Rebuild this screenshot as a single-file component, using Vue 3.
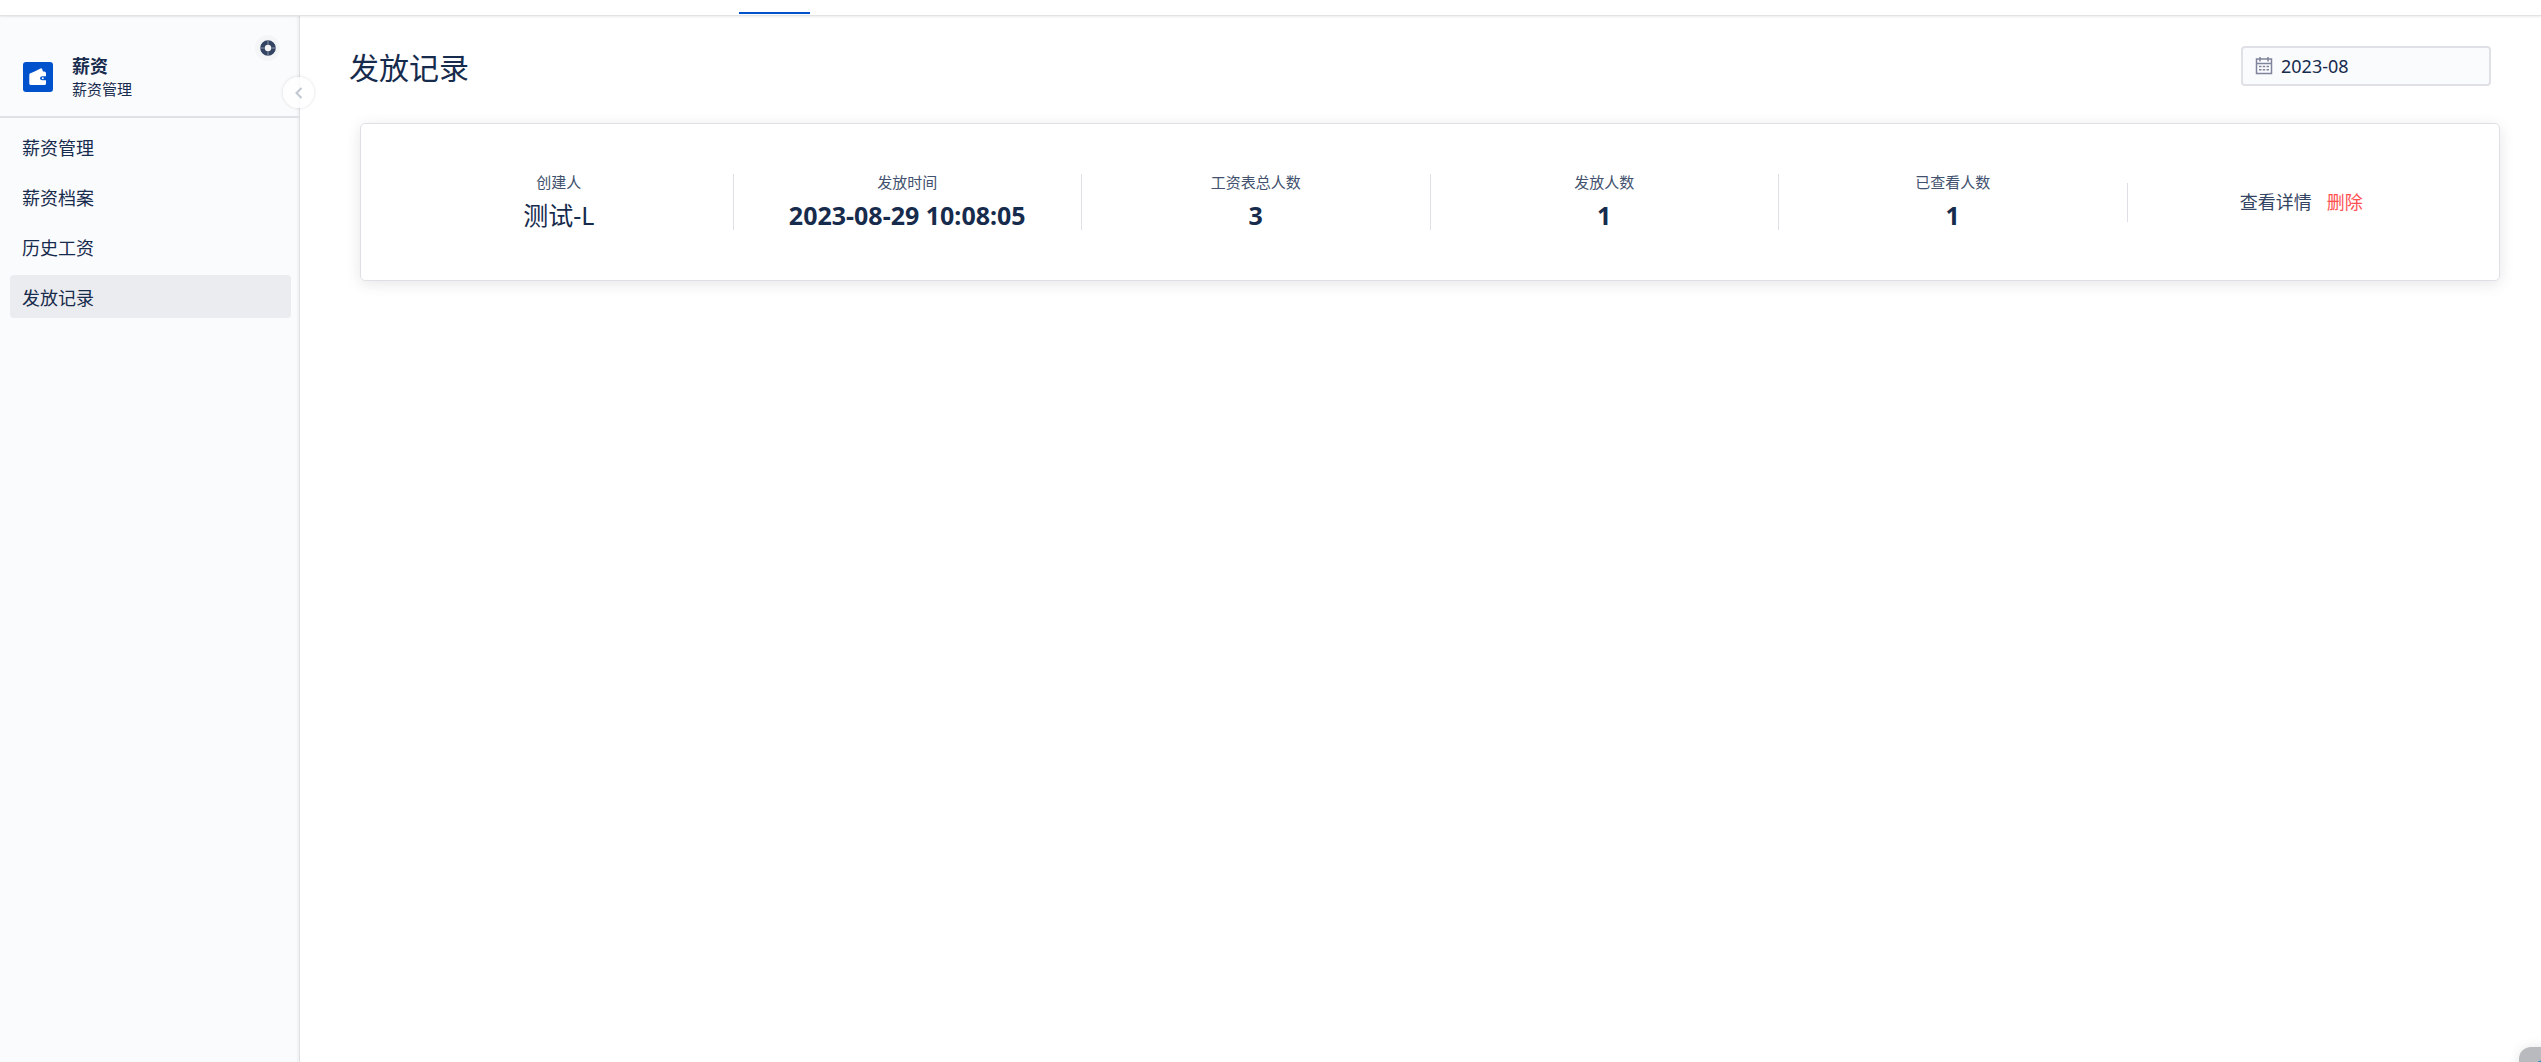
<script setup>
import { ref } from 'vue'

const menu = ['薪资管理', '薪资档案', '历史工资', '发放记录']
const active = ref('发放记录')
const month = ref('2023-08')
const record = [
  { label: '创建人', value: '测试-L', plain: true },
  { label: '发放时间', value: '2023-08-29 10:08:05' },
  { label: '工资表总人数', value: '3' },
  { label: '发放人数', value: '1' },
  { label: '已查看人数', value: '1' },
]
</script>

<template>
  <div class="app">
    <header class="topbar"><span class="tab-line"></span></header>
    <div class="body">
      <aside class="sidebar">
        <div class="brand">
          <svg class="logo" viewBox="0 0 30 30" aria-hidden="true">
            <rect width="30" height="30" rx="3" fill="#0052cc" />
            <path fill="#fff" d="M11.500 9.600 17.500 6.400q1.200-.5 1.600.5L20 9.600h1.200q1.800 0 1.800 1.700v3h-3.500q-2.500.2-2.500 2t2.500 2H23v3.200q0 1.600-1.600 1.600H8q-1.700 0-1.700-1.700V12.800Q6.300 11 8 11z" />
            <circle cx="19.800" cy="16.300" r="1" fill="#fff" />
          </svg>
          <div class="brand-text">
            <strong>薪资</strong>
            <span>薪资管理</span>
          </div>
          <button class="help" type="button" aria-label="帮助">
            <svg width="16" height="16" viewBox="0 0 16 16">
              <circle cx="8" cy="8" r="5.500" fill="none" stroke="#344563" stroke-width="4.600" />
              <path d="M8 0v5M8 11v5M0 8h5M11 8h5" stroke="#8b97aa" stroke-width="1" />
            </svg>
          </button>
        </div>
        <nav class="menu">
          <a v-for="m in menu" :key="m" href="#" :class="{ active: m === active }" @click.prevent="active = m">{{ m }}</a>
        </nav>
        <button class="collapse" type="button" aria-label="收起">
          <svg width="8" height="12" viewBox="0 0 8 12"><path d="M6.500 1 1.500 6l5 5" fill="none" stroke="#c1c7d0" stroke-width="2" /></svg>
        </button>
      </aside>
      <main class="main">
        <div class="head">
          <h1>发放记录</h1>
          <label class="picker">
            <svg width="18" height="18" viewBox="0 0 18 18" fill="none" stroke="#7f849c" aria-hidden="true">
              <rect x="1.500" y="2" width="15" height="14.500" stroke-width="1.500" />
              <path d="M1 6.500h16" stroke-width="1.500" />
              <path d="M5 0v4.500M13 0v4.500" stroke-width="1.500" />
              <path d="M4 9.500h2.500M7.700 9.500h2.500M11.500 9.500H14M4 12.800h2.500M7.700 12.800h2.500M11.500 12.800H14" stroke-width="1.500" />
            </svg>
            <input v-model="month" type="text" aria-label="月份" />
          </label>
        </div>
        <section class="card">
          <div v-for="c in record" :key="c.label" class="cell">
            <span class="label">{{ c.label }}</span>
            <span class="value" :class="{ plain: c.plain }">{{ c.value }}</span>
          </div>
          <div class="cell actions">
            <a href="#">查看详情</a>
            <a href="#" class="danger">删除</a>
          </div>
        </section>
      </main>
    </div>
    <button class="widget" type="button" aria-label="客服"><span></span></button>
  </div>
</template>

<style>
body {
  margin: 0;
}
</style>

<style scoped>
.app {
  display: flex;
  flex-direction: column;
  min-height: 100vh;
  background: #fff;
  color: #172b4d;
  font: 400 18px/24px "Noto Sans", "Noto Sans CJK SC", sans-serif;
}
button {
  padding: 0;
  border: 0;
  display: flex;
  align-items: center;
  justify-content: center;
}
a {
  color: inherit;
  text-decoration: none;
}
.topbar {
  position: relative;
  z-index: 1;
  display: flex;
  align-items: flex-end;
  box-sizing: border-box;
  height: 16px;
  padding: 0 0 1px 739px;
  border-bottom: 1px solid #e2e3e5;
  box-shadow: 0 1px 2px rgba(0, 0, 0, 0.08);
}
.tab-line {
  width: 71px;
  height: 2px;
  background: #0052cc;
}
.body {
  flex: 1;
  display: flex;
}
.sidebar {
  position: relative;
  box-sizing: border-box;
  flex: none;
  width: 300px;
  background: #fafbfd;
  border-right: 1px solid #dfe0e3;
  box-shadow: inset -2px 0 2px rgba(0, 0, 0, 0.04);
}
.brand {
  display: flex;
  align-items: flex-start;
  box-sizing: border-box;
  height: 102px;
  padding: 19px 19px 0 23px;
  border-bottom: 2px solid #dfe1e6;
}
.logo {
  width: 30px;
  height: 30px;
  margin-top: 27px;
}
.brand-text {
  display: flex;
  flex-direction: column;
  flex: 1;
  margin: 19px 0 0 19px;
}
.brand-text strong {
  font-weight: 700;
}
.brand-text span {
  font-size: 15px;
  line-height: 22px;
}
.help {
  width: 25px;
  height: 26px;
  border-radius: 50%;
  background: #f4f5f7;
}
.menu {
  display: flex;
  flex-direction: column;
  gap: 7px;
  padding: 7px 8px 0 10px;
}
.menu a {
  height: 43px;
  padding-left: 12px;
  border-radius: 4px;
  line-height: 46px;
}
.menu .active {
  background: #ebecef;
}
.collapse {
  position: absolute;
  top: 61px;
  right: -15px;
  width: 31px;
  height: 31px;
  border-radius: 50%;
  background: rgba(255, 255, 255, 0.8);
  box-shadow: 0 0 3px 1px rgba(0, 0, 0, 0.08);
}
.main {
  flex: 1;
  padding: 30px 41px 0 49px;
}
.head {
  display: flex;
  justify-content: space-between;
  height: 42px;
  padding-right: 9px;
}
h1 {
  margin: 0;
  font-size: 30px;
  font-weight: 400;
  line-height: 44px;
}
.picker {
  display: flex;
  align-items: center;
  gap: 8px;
  box-sizing: border-box;
  width: 250px;
  height: 40px;
  padding: 0 12px;
  border: 2px solid #dfe1e6;
  border-radius: 4px;
  background: #fafbfd;
}
.picker input {
  flex: 1;
  min-width: 0;
  padding: 0;
  border: 0;
  outline: 0;
  background: none;
  color: inherit;
  font: inherit;
}
.card {
  display: flex;
  align-items: center;
  box-sizing: border-box;
  min-height: 158px;
  margin: 35px 0 0 11px;
  padding: 0 24px;
  border: 1px solid #dfe0e5;
  border-radius: 5px;
  box-shadow: 0 3px 15px rgba(0, 0, 0, 0.1);
}
.cell {
  box-sizing: border-box;
  flex: 1 1 0;
  display: flex;
  flex-direction: column;
  align-items: center;
  height: 56px;
  border-right: 1px solid #dfe0e5;
}
.cell:nth-child(5) {
  border-right: 0;
}
.label {
  color: #42526e;
  font-size: 15px;
  line-height: 16px;
}
.value {
  padding-top: 7px;
  font-size: 25px;
  font-weight: 700;
  line-height: 36px;
}
.plain {
  font-weight: 400;
}
.actions {
  flex-direction: row;
  justify-content: center;
  gap: 15px;
  height: 39px;
  border-right: 0;
  border-left: 1px solid #dfe0e5;
  color: #344563;
}
.danger {
  color: #ff5050;
}
.widget {
  position: fixed;
  right: -28px;
  bottom: -35px;
  width: 50px;
  height: 50px;
  border-radius: 12px;
  background: #b9babd;
  box-shadow: 0 0 12px rgba(0, 0, 0, 0.1);
}
.widget span {
  width: 24px;
  height: 24px;
  border-radius: 50%;
  border-top: 1px solid #2a86c8;
  background: #18a999;
}
</style>
